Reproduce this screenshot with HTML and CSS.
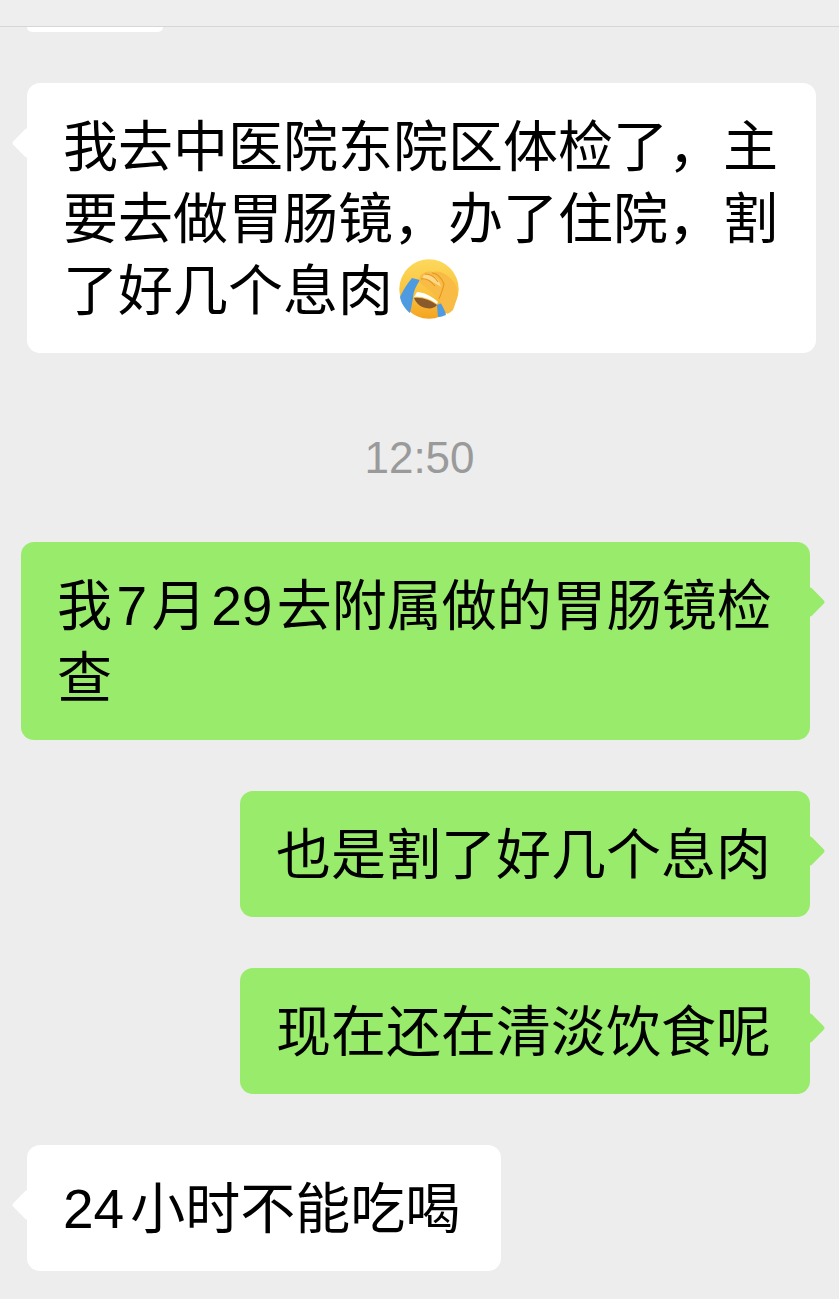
FILE: index.html
```html
<!DOCTYPE html>
<html lang="zh-CN">
<head>
    <meta charset="UTF-8">
    <meta name="viewport" content="width=device-width, initial-scale=1.0">
    <title>聊天</title>
    <link rel="stylesheet" href="styles.css">
</head>
<body>
    <div class="top-bar"></div>

    <div class="chat">
        <div class="cut-bubble"></div>

        <div class="row row-left">
            <div class="bubble bubble-white bubble-wide">我去中医院东院区体检了，主要去做胃肠镜，办了住院，割了好几个息肉<svg class="emoji" viewBox="0 0 60 60" aria-hidden="true">
                    <defs>
                        <linearGradient id="face" x1="0" y1="0" x2="0" y2="1">
                            <stop offset="0" stop-color="#fdd85c"/>
                            <stop offset="0.6" stop-color="#f9c23c"/>
                            <stop offset="1" stop-color="#f4a322"/>
                        </linearGradient>
                    </defs>
                    <circle cx="30" cy="30" r="29.7" fill="url(#face)"/>
                    <path d="M15 39 C23 38 31 41 38 46 C36 49 31 50 27 49 C21 48 17 44 15 39Z" fill="#8a5a2a"/>
                    <path d="M18 33 C24 33 33 37 39 43 L38 45 C31 40 23 37 15 38Z" fill="#fff"/>
                    <path d="M13 19 L21 21 C17 27 14 33 14 39 C13 45 12 50 11 54 C6 50 2 44 1 38 C4 31 8 25 13 19Z" fill="#4e9be2"/>
                    <path d="M38 46 L43 44 L47 56 C44 57 42 58 39 58Z" fill="#4e9be2"/>
                    <path d="M22 16 C26 12 31 12 34 13 C40 11 47 15 51 19 C56 23 58 28 58 33 C58 40 56 46 54 51 C52 53 50 54 48 55 C45 50 42 45 40 40 C35 35 28 29 21 24 C20 21 20 18 22 16Z" fill="#f8bb45"/>
                    <path d="M24 17 C28 14 32 15 36 18 C39 20 41 24 42 28 C36 24 29 20 24 20Z" fill="#fdd98a"/>
                    <path d="M22 20 C27 19 32 22 36 27 M26 15 C31 15 36 18 39 23 M33 14 C38 14 42 18 45 25 M45 25 C44 30 42 35 40 40" fill="none" stroke="#e6951f" stroke-width="1.1"/>
                </svg></div>
        </div>

        <div class="time">12:50</div>

        <div class="row row-right">
            <div class="bubble bubble-green bubble-wide">我<span class="num">7</span>月<span class="num">29</span>去附属做的胃肠镜检查</div>
        </div>

        <div class="row row-right">
            <div class="bubble bubble-green">也是割了好几个息肉</div>
        </div>

        <div class="row row-right">
            <div class="bubble bubble-green">现在还在清淡饮食呢</div>
        </div>

        <div class="row row-left">
            <div class="bubble bubble-white bubble-short"><span class="num num-first">24</span>小时不能吃喝</div>
        </div>
    </div>
</body>
</html>
```

FILE: styles.css
```css
html, body {
    height: 100%;
}

body {
    margin: 0;
    background-color: #ededed;
    color: #000;
    font-family: "Noto Sans CJK SC", "Liberation Sans", sans-serif;
    overflow: hidden;
}

.top-bar {
    height: 26px;
    background-color: #eeeeee;
    border-bottom: 1px solid #d6d6d6;
}

.chat {
    display: flex;
    flex-direction: column;
    gap: 51px;
}

.cut-bubble {
    width: 136px;
    height: 5px;
    margin-left: 27px;
    background-color: #fff;
    border-radius: 0 0 12px 12px;
}

.row {
    display: flex;
}

.row-left {
    justify-content: flex-start;
    padding-left: 27px;
}

.row-right {
    justify-content: flex-end;
    padding-right: 29px;
}

.bubble {
    position: relative;
    box-sizing: border-box;
    max-width: 789px;
    padding: 23px 39px 31px 36px;
    border-radius: 13px;
    font-size: 55px;
    line-height: 72px;
}

.bubble::before {
    content: "";
    position: absolute;
    top: 49px;
    width: 22px;
    height: 22px;
    border-radius: 3px;
    transform: rotate(45deg);
}

.bubble-white {
    background-color: #fff;
}

.bubble-white::before {
    left: -11px;
    background-color: #fff;
}

.bubble-green {
    background-color: #99eb6b;
}

.bubble-green::before {
    right: -11px;
    background-color: #99eb6b;
}

/* wide bubbles hold exactly 13 characters on a line */
.bubble-wide {
    padding-right: 38px;
}

.bubble-short {
    padding-right: 41px;
}

.num {
    margin: 0 4.5px;
    font-family: "Liberation Sans", sans-serif;
    line-height: 1;
}

.num-first {
    margin: 0 6px 0 0;
}

.emoji {
    width: 60px;
    height: 60px;
    margin-left: 6px;
    vertical-align: -9px;
}

.time {
    margin: 12px 0 -9px;
    font-family: "Liberation Sans", sans-serif;
    font-size: 44px;
    line-height: 84px;
    text-align: center;
    color: #9a9a9a;
}
```
